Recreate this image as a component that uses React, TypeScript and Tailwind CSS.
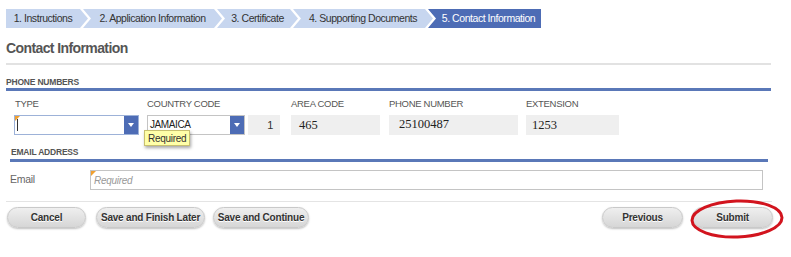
import React from "react";

const steps = [
  { label: "1. Instructions", w: "w-[82px]", shape: "first" },
  { label: "2. Application Information", w: "w-[139px]", shape: "mid" },
  { label: "3. Certificate", w: "w-[81px]", shape: "mid" },
  { label: "4. Supporting Documents", w: "w-[140px]", shape: "mid" },
  { label: "5. Contact Information", w: "w-[113px]", shape: "last" },
];

function Step({ label, w, shape }: { label: string; w: string; shape: string }) {
  const clip =
    shape === "first"
      ? "[clip-path:polygon(0_0,calc(100%_-_8px)_0,100%_50%,calc(100%_-_8px)_100%,0_100%)] pr-[8px]"
      : shape === "mid"
      ? "[clip-path:polygon(0_0,calc(100%_-_8px)_0,100%_50%,calc(100%_-_8px)_100%,0_100%,8px_50%)] pl-[8px] pr-[8px] -ml-[5px]"
      : "[clip-path:polygon(0_0,100%_0,100%_100%,0_100%,8px_50%)] pl-[8px] -ml-[5px]";
  const color = shape === "last" ? "bg-[#4d6cb5] text-white" : "bg-[#c7d6ef] text-[#333]";
  return (
    <div className={`${w} ${clip} ${color} h-[19px] flex items-center justify-center text-[10.5px] tracking-[-0.45px] whitespace-nowrap`}>
      {label}
    </div>
  );
}

function Arrow() {
  return (
    <div className="w-[14px] h-full bg-[#4d6cb5] flex items-center justify-center">
      <svg width="6" height="4" viewBox="0 0 6 4">
        <path d="M0 0 L6 0 L3 4 Z" fill="#fff" />
      </svg>
    </div>
  );
}

function Corner() {
  return <div className="absolute left-0 top-0 w-0 h-0 border-t-[5px] border-r-[5px] border-t-[#f0a030] border-r-transparent" />;
}

function Btn({ children, w }: { children: React.ReactNode; w: string }) {
  return (
    <div className={`${w} h-[21px] rounded-full border border-[#c9c9c9] bg-gradient-to-b from-[#efefef] to-[#d6d6d6] shadow-[0_1px_2px_rgba(0,0,0,0.25)] flex items-center justify-center text-[10px] font-bold text-[#333] tracking-[-0.2px] [text-shadow:0_1px_0_#fff]`}>
      {children}
    </div>
  );
}

export default function App() {
  return (
    <div className="relative w-[791px] h-[257px] bg-white overflow-hidden font-['Liberation_Sans',Arial,sans-serif]">
      {/* steps */}
      <div className="flex pt-[9px] pl-[6px]">
        {steps.map((s) => (
          <Step key={s.label} {...s} />
        ))}
      </div>

      <h1 className="mt-[10px] px-[6px] text-[14px] leading-[20px] font-bold text-[#555] tracking-[-0.6px]">Contact Information</h1>
      <div className="mt-[5px] ml-[6px] w-[765px] h-[2px] bg-[#e2e2e2]" />

      {/* phone numbers */}
      <div className="mt-[12px] pl-[6px] text-[8.5px] leading-[10px] font-bold text-[#555] tracking-[-0.2px]">PHONE NUMBERS</div>
      <div className="mt-[1px] ml-[6px] w-[765px] h-[3px] bg-[#5a78b8]" />

      <div className="flex pl-[14px] mt-[8px] text-[9.5px] leading-[10px] text-[#555] tracking-[-0.3px]">
        <div className="w-[125px]">
          <div className="pl-[1px]">TYPE</div>
          <div className="relative mt-[6px] h-[20px] border border-[#9db2d8] bg-white flex">
            <Corner />
            <div className="flex-1 flex items-center pl-[2px]">
              <div className="w-px h-[12px] bg-[#333]" />
            </div>
            <Arrow />
          </div>
        </div>
        <div className="w-[133px] ml-[8px]">
          <div>COUNTRY CODE</div>
          <div className="mt-[6px] h-[20px] flex">
            <div className="w-[98px] border border-[#c4c4c4] bg-white flex">
              <div className="flex-1 flex items-center pl-[2px] text-[10px] text-[#222] tracking-[-0.4px]">JAMAICA</div>
              <Arrow />
            </div>
            <div className="flex-1 bg-[#efefef] ml-[3px] flex items-center justify-end pr-[7px] text-[11px] text-[#333]">1</div>
          </div>
        </div>
        <div className="w-[89px] ml-[11px]">
          <div>AREA CODE</div>
          <div className="mt-[6px] h-[20px] bg-[#efefef] flex items-center pl-[8px] font-['Liberation_Serif',serif] text-[12.5px] text-[#222] tracking-normal">465</div>
        </div>
        <div className="w-[129px] ml-[9px]">
          <div>PHONE NUMBER</div>
          <div className="mt-[6px] h-[20px] bg-[#efefef] flex items-center pl-[10px] pb-[2px] font-['Liberation_Serif',serif] text-[12.5px] text-[#222] tracking-normal">25100487</div>
        </div>
        <div className="w-[93px] ml-[8px]">
          <div>EXTENSION</div>
          <div className="mt-[6px] h-[20px] bg-[#efefef] flex items-center pl-[6px] font-['Liberation_Serif',serif] text-[12.5px] text-[#222] tracking-normal">1253</div>
        </div>
      </div>

      {/* email */}
      <div className="mt-[12px] pl-[11px] text-[8.5px] leading-[10px] font-bold text-[#555] tracking-[-0.2px]">EMAIL ADDRESS</div>
      <div className="mt-[2px] ml-[10px] w-[758px] h-[3px] bg-[#5a78b8]" />

      <div className="mt-[8px] flex items-center h-[20px]">
        <div className="w-[90px] pl-[10px] text-[10.5px] text-[#666] tracking-[-0.3px]">Email</div>
        <div className="relative w-[673px] h-[20px] border border-[#c4c4c4] bg-white flex items-center pl-[3px] text-[10px] italic text-[#999] tracking-[-0.3px]">
          <Corner />
          Required
        </div>
      </div>

      <div className="mt-[11px] ml-[6px] w-[766px] h-px bg-[#e4e4e4]" />

      {/* buttons */}
      <div className="mt-[5px] flex pl-[7px] pr-[18px]">
        <Btn w="w-[79px]">Cancel</Btn>
        <div className="w-[10px]" />
        <Btn w="w-[109px]">Save and Finish Later</Btn>
        <div className="w-[8px]" />
        <Btn w="w-[96px]">Save and Continue</Btn>
        <div className="flex-1" />
        <Btn w="w-[81px]">Previous</Btn>
        <div className="w-[9px]" />
        <Btn w="w-[81px]">Submit</Btn>
      </div>

      {/* tooltip */}
      <div className="absolute left-[144px] top-[130px] h-[16px] px-[3px] bg-[#ffffa8] border border-[#c8c070] shadow-[1px_2px_3px_rgba(0,0,0,0.35)] flex items-center text-[10px] text-[#333] tracking-[-0.3px]">
        Required
      </div>

      {/* annotation */}
      <svg className="absolute left-[688px] top-[198px]" width="98" height="44" viewBox="0 0 98 44">
        <ellipse cx="49" cy="21" rx="45" ry="18" fill="none" stroke="#d2141e" strokeWidth="3" transform="rotate(-2 49 21)" />
      </svg>
    </div>
  );
}
